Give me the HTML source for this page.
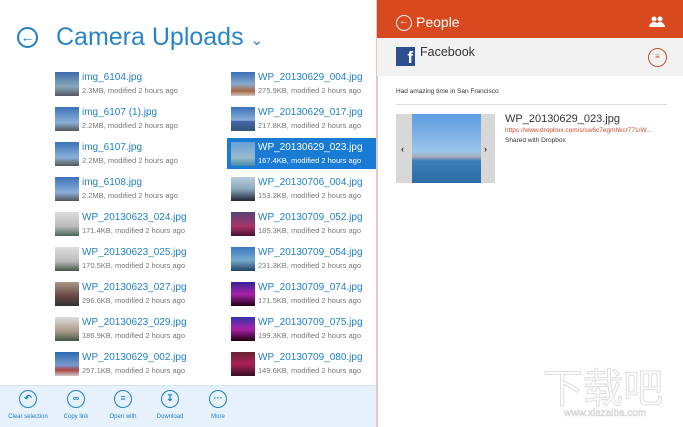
<!DOCTYPE html>
<html><head><meta charset="utf-8"><style>
*{margin:0;padding:0;box-sizing:border-box}
body{width:683px;height:427px;overflow:hidden;background:#fff;font-family:"Liberation Sans",sans-serif;position:relative}
.a{position:absolute}
.row{position:absolute;height:30px}
.th{position:absolute;left:0;top:0;width:24px;height:24px}
.nm{position:absolute;left:27px;top:0px;font-size:10px;color:#1f7fc4;white-space:nowrap}
.mt{position:absolute;left:27px;top:14px;font-size:7.5px;color:#777;white-space:nowrap}
.sel .nm,.sel .mt{color:#fff}
.bb{position:absolute;top:385px;text-align:center;width:60px}
.bb .c{width:18px;height:18px;border:1.5px solid #1f7fc4;border-radius:50%;margin:5px auto 0;color:#1f7fc4;font-size:9px;line-height:15px;font-weight:bold}
.bb .l{font-size:6px;color:#1f7fc4;margin-top:6px}
</style></head><body>
<div class="a" style="left:17px;top:27px;width:21px;height:21px;border:2px solid #1f7fc4;border-radius:50%;color:#1f7fc4;font-size:14px;line-height:16px;text-align:center;font-weight:bold">&#8592;</div>
<div class="a" style="left:56px;top:23px;font-size:25px;color:#2a84c8;white-space:nowrap">Camera Uploads <span style="font-size:15px">&#8964;</span></div>
<div class="a" style="left:227px;top:138px;width:149px;height:31px;background:#1a7bd5"></div>

<div class="row" style="left:55px;top:72px"><div class="th" style="background:linear-gradient(#3b6aa8,#8ab 60%,#556)"></div><div class="nm">img_6104.jpg</div><div class="mt">2.3MB, modified 2 hours ago</div></div>
<div class="row" style="left:55px;top:107px"><div class="th" style="background:linear-gradient(#3d72b8,#8ab0d8 65%,#555)"></div><div class="nm">img_6107 (1).jpg</div><div class="mt">2.2MB, modified 2 hours ago</div></div>
<div class="row" style="left:55px;top:142px"><div class="th" style="background:linear-gradient(#3d72b8,#8ab0d8 65%,#555)"></div><div class="nm">img_6107.jpg</div><div class="mt">2.2MB, modified 2 hours ago</div></div>
<div class="row" style="left:55px;top:177px"><div class="th" style="background:linear-gradient(#3d72b8,#8ab0d8 65%,#555)"></div><div class="nm">img_6108.jpg</div><div class="mt">2.2MB, modified 2 hours ago</div></div>
<div class="row" style="left:55px;top:212px"><div class="th" style="background:linear-gradient(#ddd,#bbb 60%,#465)"></div><div class="nm">WP_20130623_024.jpg</div><div class="mt">171.4KB, modified 2 hours ago</div></div>
<div class="row" style="left:55px;top:247px"><div class="th" style="background:linear-gradient(#ddd,#bbb 60%,#454)"></div><div class="nm">WP_20130623_025.jpg</div><div class="mt">170.5KB, modified 2 hours ago</div></div>
<div class="row" style="left:55px;top:282px"><div class="th" style="background:linear-gradient(#a98,#644 60%,#333)"></div><div class="nm">WP_20130623_027.jpg</div><div class="mt">296.6KB, modified 2 hours ago</div></div>
<div class="row" style="left:55px;top:317px"><div class="th" style="background:linear-gradient(#ddd,#a98 60%,#454)"></div><div class="nm">WP_20130623_029.jpg</div><div class="mt">186.9KB, modified 2 hours ago</div></div>
<div class="row" style="left:55px;top:352px"><div class="th" style="background:linear-gradient(#2a6ab0,#79c 55%,#a44 75%,#ccc)"></div><div class="nm">WP_20130629_002.jpg</div><div class="mt">257.1KB, modified 2 hours ago</div></div>

<div class="row" style="left:231px;top:72px"><div class="th" style="background:linear-gradient(#3a6fb5,#8ac 50%,#a64 80%,#ccc)"></div><div class="nm">WP_20130629_004.jpg</div><div class="mt">275.9KB, modified 2 hours ago</div></div>
<div class="row" style="left:231px;top:107px"><div class="th" style="background:linear-gradient(#3a70b8,#8ab0d8 55%,#46a 60%,#357)"></div><div class="nm">WP_20130629_017.jpg</div><div class="mt">217.8KB, modified 2 hours ago</div></div>
<div class="row sel" style="left:231px;top:142px"><div class="th" style="background:linear-gradient(#6aa0d8,#9bc 65%,#48a)"></div><div class="nm">WP_20130629_023.jpg</div><div class="mt">167.4KB, modified 2 hours ago</div></div>
<div class="row" style="left:231px;top:177px"><div class="th" style="background:linear-gradient(#bcd,#8ab 50%,#223)"></div><div class="nm">WP_20130706_004.jpg</div><div class="mt">153.2KB, modified 2 hours ago</div></div>
<div class="row" style="left:231px;top:212px"><div class="th" style="background:linear-gradient(#547,#a36 60%,#413)"></div><div class="nm">WP_20130709_052.jpg</div><div class="mt">185.3KB, modified 2 hours ago</div></div>
<div class="row" style="left:231px;top:247px"><div class="th" style="background:linear-gradient(#3a78c0,#7ac 55%,#246)"></div><div class="nm">WP_20130709_054.jpg</div><div class="mt">231.3KB, modified 2 hours ago</div></div>
<div class="row" style="left:231px;top:282px"><div class="th" style="background:linear-gradient(#329,#a2a 50%,#201)"></div><div class="nm">WP_20130709_074.jpg</div><div class="mt">171.5KB, modified 2 hours ago</div></div>
<div class="row" style="left:231px;top:317px"><div class="th" style="background:linear-gradient(#33a,#a2a 50%,#201)"></div><div class="nm">WP_20130709_075.jpg</div><div class="mt">199.3KB, modified 2 hours ago</div></div>
<div class="row" style="left:231px;top:352px"><div class="th" style="background:linear-gradient(#623,#a25 50%,#312)"></div><div class="nm">WP_20130709_080.jpg</div><div class="mt">149.6KB, modified 2 hours ago</div></div>

<div class="a" style="left:0;top:385px;width:377px;height:42px;background:#e6f1fb;border-top:1px solid #d5e3ef"></div>
<div class="bb" style="left:-2px"><div class="c">&#8630;</div><div class="l">Clear selection</div></div>
<div class="bb" style="left:46px"><div class="c">&#8734;</div><div class="l">Copy link</div></div>
<div class="bb" style="left:93px"><div class="c">&#8801;</div><div class="l">Open with</div></div>
<div class="bb" style="left:140px"><div class="c">&#8615;</div><div class="l">Download</div></div>
<div class="bb" style="left:188px"><div class="c">&#183;&#183;&#183;</div><div class="l">More</div></div>

<div class="a" style="left:376px;top:0;width:2px;height:427px;background:#e8c8c0"></div>
<div class="a" style="left:377px;top:0;width:306px;height:38px;background:#d9491f"></div>
<div class="a" style="left:396px;top:15px;width:16px;height:16px;border:1.5px solid #fff;border-radius:50%;color:#fff;font-size:10px;line-height:12px;text-align:center;font-weight:bold">&#8592;</div>
<div class="a" style="left:416px;top:14px;font-size:14px;color:#fff">People</div>
<svg class="a" style="left:649px;top:16px" width="16" height="12" viewBox="0 0 16 12"><circle cx="5" cy="3" r="2.5" fill="#fff"/><circle cx="11" cy="3" r="2.5" fill="#fff"/><path d="M0 11 Q1 6 5 6 Q9 6 10 11Z M6 11 Q7 6 11 6 Q15 6 16 11Z" fill="#fff"/></svg>
<div class="a" style="left:377px;top:38px;width:306px;height:38px;background:#f2f2f2"></div>
<div class="a" style="left:396px;top:47px;width:19px;height:19px;background:#2d4f8e;color:#fff;font-weight:bold;font-size:17px;line-height:22px;text-align:right;padding-right:2px;overflow:hidden">f</div>
<div class="a" style="left:420px;top:45px;font-size:12.5px;color:#333">Facebook</div>
<div class="a" style="left:648px;top:48px;width:19px;height:19px;border:1.5px solid #c8502a;border-radius:50%;color:#c8502a;font-size:8px;line-height:16px;text-align:center">&#8801;</div>
<div class="a" style="left:396px;top:88px;font-size:6.5px;color:#333">Had amazing time in San Francisco</div>
<div class="a" style="left:396px;top:104px;width:271px;height:1px;background:#ddd"></div>
<div class="a" style="left:396px;top:114px;width:99px;height:69px;background:#d8d8d8"></div>
<div class="a" style="left:412px;top:114px;width:69px;height:69px;background:linear-gradient(#5d9de0,#9cc4ea 55%,#aab 62%,#3a7fb6 68%,#2c6da4)"></div>
<div class="a" style="left:401px;top:144px;font-size:9px;color:#333;font-weight:bold">&#8249;</div>
<div class="a" style="left:484px;top:144px;font-size:9px;color:#333;font-weight:bold">&#8250;</div>
<div class="a" style="left:505px;top:113px;font-size:11px;color:#333">WP_20130629_023.jpg</div>
<div class="a" style="left:505px;top:127px;font-size:6.5px;color:#d04a2a;white-space:nowrap">https://www.dropbox.com/s/sw6c7egmhkcr771/W...</div>
<div class="a" style="left:505px;top:137px;font-size:6.5px;color:#333">Shared with Dropbox</div>

<div class="a" style="left:543px;top:365px;font-size:40px;color:#fff;-webkit-text-stroke:1px #ddd;font-family:'Noto Sans CJK SC',sans-serif;line-height:40px">下载吧</div>
<div class="a" style="left:564px;top:408px;font-size:10px;color:#fff;-webkit-text-stroke:0.5px #ccc">www.xiazaiba.com</div>
</body></html>
